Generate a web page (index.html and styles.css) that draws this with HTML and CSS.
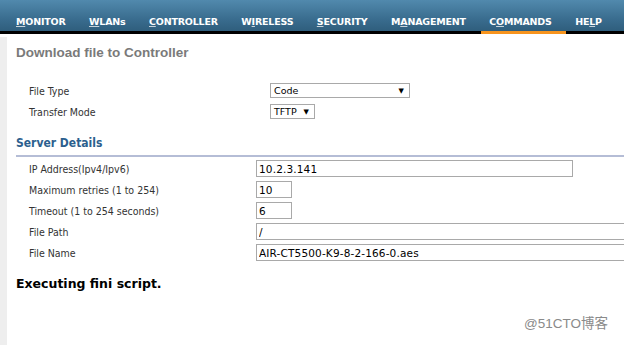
FILE: index.html
```html
<!DOCTYPE html>
<html lang="en">
<head>
    <meta charset="UTF-8">
    <title>Download file to Controller</title>
    <link rel="stylesheet" href="styles.css">
</head>
<body>
    <div class="topnav">
        <a class="nav-item"><u>M</u>ONITOR</a>
        <a class="nav-item"><u>W</u>LANs</a>
        <a class="nav-item"><u>C</u>ONTROLLER</a>
        <a class="nav-item">W<u>I</u>RELESS</a>
        <a class="nav-item"><u>S</u>ECURITY</a>
        <a class="nav-item">M<u>A</u>NAGEMENT</a>
        <a class="nav-item active">C<u>O</u>MMANDS</a>
        <a class="nav-item">HE<u>L</u>P</a>
    </div>
    <div class="page">
        <div class="sidebar"></div>
        <div class="content">
            <h2 class="title">Download file to Controller</h2>

            <div class="form">
                <div class="row">
                    <span class="label">File Type</span>
                    <span class="select wide">Code<i class="arrow">&#9660;</i></span>
                </div>
                <div class="row">
                    <span class="label">Transfer Mode</span>
                    <span class="select small">TFTP<i class="arrow">&#9660;</i></span>
                </div>
            </div>

            <h3 class="section">Server Details</h3>

            <div class="form server">
                <div class="row">
                    <span class="label">IP Address(Ipv4/Ipv6)</span>
                    <input class="field ip" type="text" value="10.2.3.141">
                </div>
                <div class="row">
                    <span class="label">Maximum retries (1 to 254)</span>
                    <input class="field num" type="text" value="10">
                </div>
                <div class="row">
                    <span class="label">Timeout (1 to 254 seconds)</span>
                    <input class="field num" type="text" value="6">
                </div>
                <div class="row">
                    <span class="label">File Path</span>
                    <input class="field long" type="text" value="/">
                </div>
                <div class="row">
                    <span class="label">File Name</span>
                    <input class="field long" type="text" value="AIR-CT5500-K9-8-2-166-0.aes">
                </div>
            </div>

            <p class="status">Executing fini script.</p>
        </div>
    </div>
    <div class="watermark">@51CTO博客</div>
</body>
</html>
```

FILE: styles.css
```css
html, body {
    height: 100%;
}
body {
    margin: 0;
    font-family: "DejaVu Sans", Verdana, sans-serif;
    background-color: #fff;
    overflow: hidden;
    position: relative;
}
.topnav {
    height: 31px;
    display: flex;
    align-items: flex-end;
    gap: 23.5px;
    padding-left: 16px;
    background: linear-gradient(#5189ad, #3a6d8f 60%, #2f5e7d);
    border-bottom: 3px solid #000;
}
.nav-item {
    color: #fff;
    font-size: 9.5px;
    font-weight: bold;
    padding-bottom: 4px;
    letter-spacing: -0.2px;
    position: relative;
}
.nav-item u {
    text-decoration-color: #c8d4dc;
}
.nav-item.active::after {
    content: "";
    position: absolute;
    left: -8px;
    right: -14px;
    bottom: -3px;
    height: 3px;
    background-color: #f7941d;
}
.page {
    display: flex;
    height: calc(100% - 34px);
    padding-top: 3px;
    box-sizing: border-box;
}
.sidebar {
    width: 7px;
    background-color: #eeeeee;
    flex-shrink: 0;
}
.content {
    flex: 1;
    padding-left: 9px;
}
.title {
    margin: 8px 0 0 0;
    font-family: "Liberation Sans", Arial, sans-serif;
    font-size: 13.5px;
    font-weight: bold;
    color: #7a7a7a;
    height: 20px;
}
.form {
    padding-left: 13px;
    margin-top: 15px;
}
.row {
    display: flex;
    align-items: center;
    height: 21px;
}
.label {
    font-family: "DejaVu Sans Condensed", "DejaVu Sans", sans-serif;
    font-stretch: condensed;
    font-size: 10.5px;
    color: #333;
    width: 241px;
    flex-shrink: 0;
}
.select {
    display: inline-flex;
    align-items: center;
    justify-content: space-between;
    height: 15px;
    border: 1px solid #a9a9a9;
    box-sizing: border-box;
    font-size: 9.5px;
    color: #000;
    padding: 0 5px 0 3px;
    background: #fff;
}
.select.wide {
    width: 140px;
}
.select.small {
    width: 45px;
}
.arrow {
    font-style: normal;
    font-size: 7px;
}
.section {
    margin: 14px 0 0 0;
    font-family: "DejaVu Sans Condensed", "DejaVu Sans", sans-serif;
    font-stretch: condensed;
    font-size: 12px;
    font-weight: bold;
    color: #2c5f8e;
    padding-bottom: 5px;
    border-bottom: 2px solid #b5bdd6;
}
.server {
    margin-top: 1px;
}
.server .label {
    width: 227px;
}
.field {
    height: 17px;
    box-sizing: border-box;
    border: 1px solid #a9a9a9;
    font-family: "DejaVu Sans", Verdana, sans-serif;
    font-size: 10.5px;
    letter-spacing: 0.15px;
    color: #000;
    padding: 0 2px;
    margin: 0;
}
.field.ip {
    width: 317px;
}
.field.num {
    width: 36px;
}
.field.long {
    width: 380px;
    flex-shrink: 0;
}
.status {
    margin: 13px 0 0 0;
    font-size: 12.5px;
    font-weight: bold;
    color: #000;
}
.watermark {
    position: absolute;
    right: 16px;
    bottom: 13px;
    font-family: "Liberation Sans", "Noto Sans CJK SC", sans-serif;
    font-size: 13.5px;
    color: #8a8a8a;
}
```
